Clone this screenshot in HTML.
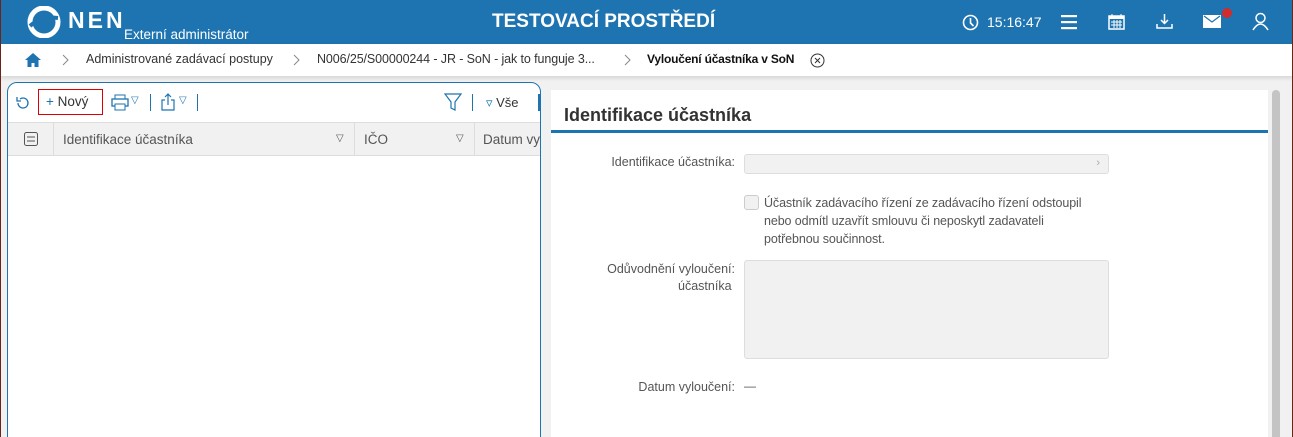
<!DOCTYPE html>
<html><head><meta charset="utf-8"><style>
*{box-sizing:border-box;margin:0;padding:0}
html{width:1293px;height:437px;overflow:hidden}
body{width:1293px;height:437px;overflow:hidden;background:#f1f1f1;font-family:"Liberation Sans",sans-serif;position:relative}
.hdr{position:absolute;left:0;top:0;width:1293px;height:44px;background:#1e74b0;color:#fff}
.abs{position:absolute;white-space:nowrap}
.bc{position:absolute;left:0;top:44px;width:1293px;height:32px;background:#fff;box-shadow:0 2px 4px rgba(0,0,0,.12);font-size:12.5px;color:#333}
.bc span{position:absolute;top:8px;white-space:nowrap}
.lp{position:absolute;left:7px;top:82px;width:534px;height:370px;background:#fff;border:1px solid #1e74b0;border-radius:10px 10px 0 0;overflow:hidden}
.rp{position:absolute;left:551px;top:90px;width:717px;height:360px;background:#fff}
.lbl{position:absolute;font-size:12.5px;color:#555;text-align:right;white-space:nowrap}
</style></head><body>
<div class="abs" style="left:0;top:0;width:1px;height:437px;background:#6b2418;z-index:5"></div>
<div class="abs" style="left:1292px;top:0;width:1px;height:437px;background:#6b2418;z-index:5"></div>
<div class="hdr">
 <svg class="abs" style="left:27px;top:6px" width="34" height="32" viewBox="0 0 34 32"><circle cx="17" cy="16" r="14" fill="none" stroke="#fff" stroke-width="5"/><path d="M3 20 Q14 10 31 12" stroke="#1e74b0" stroke-width="4" fill="none"/></svg>
 <div class="abs" style="left:68px;top:7px;font-size:23px;font-weight:bold;letter-spacing:3px">NEN</div>
 <div class="abs" style="left:124px;top:27px;font-size:13.5px">Externí administrátor</div>
 <div class="abs" style="left:492px;top:11px;font-size:19px;font-weight:bold;letter-spacing:0">TESTOVACÍ PROSTŘEDÍ</div>
 <svg class="abs" style="left:962px;top:14px" width="17" height="17" viewBox="0 0 17 17"><circle cx="8.5" cy="8.5" r="7" fill="none" stroke="#fff" stroke-width="1.6"/><path d="M8.5 4v5l3 3" stroke="#fff" stroke-width="1.6" fill="none"/></svg>
 <div class="abs" style="left:987px;top:14px;font-size:14px">15:16:47</div>
 <svg class="abs" style="left:1061px;top:14px" width="16" height="16"><rect y="1" width="16" height="2.2" fill="#fff"/><rect y="7" width="16" height="2.2" fill="#fff"/><rect y="13" width="16" height="2.2" fill="#fff"/></svg>
 <svg class="abs" style="left:1108px;top:13px" width="17" height="17"><rect x="1" y="3" width="15" height="13" fill="none" stroke="#fff" stroke-width="1.5"/><rect x="1" y="3" width="15" height="3" fill="#fff"/><path d="M4 1v4M13 1v4M3 9h11M3 12h11M6 7v8M9 7v8M12 7v8" stroke="#fff" stroke-width="1"/></svg>
 <svg class="abs" style="left:1156px;top:13px" width="17" height="17"><path d="M8.5 1v9M5 7l3.5 3.5L12 7" stroke="#fff" stroke-width="1.5" fill="none"/><path d="M1 11v4h15v-4" stroke="#fff" stroke-width="1.5" fill="none"/></svg>
 <svg class="abs" style="left:1203px;top:15px" width="18" height="13"><rect width="18" height="13" fill="#fff"/><path d="M1 1l8 6 8-6" stroke="#1e74b0" stroke-width="1.2" fill="none"/></svg>
 <div class="abs" style="left:1222px;top:8px;width:10px;height:10px;border-radius:50%;background:#d22b2b"></div>
 <svg class="abs" style="left:1252px;top:12px" width="17" height="19"><circle cx="8.5" cy="6" r="4.5" fill="none" stroke="#fff" stroke-width="1.5"/><path d="M1 18q7.5-12 15 0" fill="none" stroke="#fff" stroke-width="1.5"/></svg>
</div>
<div class="bc">
 <svg class="abs" style="left:24px;top:8px" width="18" height="16"><path d="M9 1L1 8h2.5v7h4v-4h3v4h4V8H17z" fill="#1e74b0"/></svg>
 <svg class="abs" style="left:62px;top:10px" width="8" height="12"><path d="M1 1l5 5-5 5" fill="none" stroke="#888"/></svg>
 <span style="left:86px">Administrované zadávací postupy</span>
 <svg class="abs" style="left:293px;top:10px" width="8" height="12"><path d="M1 1l5 5-5 5" fill="none" stroke="#888"/></svg>
 <span style="left:317px;letter-spacing:-.1px">N006/25/S00000244 - JR - SoN - jak to funguje 3...</span>
 <svg class="abs" style="left:624px;top:10px" width="8" height="12"><path d="M1 1l5 5-5 5" fill="none" stroke="#888"/></svg>
 <span style="left:647px;font-weight:bold;color:#111;font-size:12px;letter-spacing:-.2px">Vyloučení účastníka v SoN</span>
 <svg class="abs" style="left:810px;top:9px" width="15" height="15"><circle cx="7.5" cy="7.5" r="6.5" fill="none" stroke="#333"/><path d="M5 5l5 5M10 5l-5 5" stroke="#333"/></svg>
</div>
<div class="lp">
 <svg class="abs" style="left:7px;top:12px" width="16" height="16"><path d="M3 8a5 5 0 1 0 2-4" fill="none" stroke="#1e74b0" stroke-width="1.3"/><path d="M2 2v4h4" fill="none" stroke="#1e74b0" stroke-width="1.3"/></svg>
 <div class="abs" style="left:30px;top:6px;width:65px;height:26px;border:1px solid #d00;font-size:13.5px;color:#1e74b0;padding:4px 0 0 7px">+ <span style="color:#333">Nový</span></div>
 <svg class="abs" style="left:103px;top:11px" width="18" height="17"><rect x="4" y="1" width="10" height="4" fill="none" stroke="#1e74b0"/><rect x="1" y="5" width="16" height="7" fill="none" stroke="#1e74b0" stroke-width="1.3"/><rect x="4" y="10" width="10" height="6" fill="#fff" stroke="#1e74b0"/></svg>
 <div class="abs" style="left:123px;top:12px;font-size:10px;color:#1e74b0">▽</div>
 <div class="abs" style="left:142px;top:11px;width:1px;height:17px;background:#1e74b0"></div>
 <svg class="abs" style="left:152px;top:10px" width="16" height="18"><path d="M5 7H2v10h12V7h-3M8 12V1M5 4l3-3 3 3" fill="none" stroke="#1e74b0" stroke-width="1.2"/></svg>
 <div class="abs" style="left:171px;top:12px;font-size:10px;color:#1e74b0">▽</div>
 <div class="abs" style="left:189px;top:11px;width:1px;height:17px;background:#1e74b0"></div>
 <svg class="abs" style="left:436px;top:10px" width="18" height="18"><path d="M1 1h16l-6 8v8l-4-2V9z" fill="none" stroke="#1e74b0" stroke-width="1.2"/></svg>
 <div class="abs" style="left:464px;top:11px;width:1px;height:17px;background:#1e74b0"></div>
 <div class="abs" style="left:478px;top:12px;font-size:13px;color:#1e74b0">▿ <span style="color:#333">Vše</span></div>
 <div class="abs" style="left:530px;top:11px;width:2px;height:17px;background:#1e74b0"></div>
 <div class="abs" style="left:0;top:39px;width:534px;height:34px;background:#f1f1f1;border-top:1px solid #ddd;border-bottom:1px solid #ddd;font-size:13.5px;color:#555">
  <svg class="abs" style="left:16px;top:9px" width="14" height="14"><rect x=".5" y=".5" width="13" height="13" rx="2" fill="none" stroke="#555"/><path d="M3 5h8M3 9h8" stroke="#555"/></svg>
  <div class="abs" style="left:45px;top:0;width:1px;height:33px;background:#ddd"></div>
  <span class="abs" style="left:55px;top:9px">Identifikace účastníka</span>
  <span class="abs" style="left:328px;top:10px;font-size:10px">▽</span>
  <div class="abs" style="left:346px;top:0;width:1px;height:33px;background:#ddd"></div>
  <span class="abs" style="left:356px;top:9px">IČO</span>
  <span class="abs" style="left:448px;top:10px;font-size:10px">▽</span>
  <div class="abs" style="left:466px;top:0;width:1px;height:33px;background:#ddd"></div>
  <span class="abs" style="left:475px;top:9px">Datum vyl</span>
 </div>
</div>
<div class="rp">
 <div class="abs" style="left:13px;top:15px;font-size:18px;font-weight:bold;color:#333">Identifikace účastníka</div>
 <div class="abs" style="left:0;top:40px;width:717px;height:3px;background:#1e74b0"></div>
 <div class="lbl" style="left:0;top:65px;width:184px">Identifikace účastníka:</div>
 <div class="abs" style="left:193px;top:64px;width:365px;height:20px;background:#f1f1f1;border:1px solid #ddd;border-radius:3px;font-size:11px;color:#aaa;text-align:right;padding:2px 8px 0 0">›</div>
 <div class="abs" style="left:193px;top:105px;width:15px;height:15px;background:#f1f1f1;border:1px solid #ccc;border-radius:3px"></div>
 <div class="abs" style="left:213px;top:104px;font-size:12.5px;line-height:18px;color:#555;width:360px;white-space:normal;letter-spacing:-.1px">Účastník zadávacího řízení ze zadávacího řízení odstoupil<br>nebo odmítl uzavřít smlouvu či neposkytl zadavateli<br>potřebnou součinnost.</div>
 <div class="lbl" style="left:0;top:171px;width:184px;line-height:17px">Odůvodnění vyloučení:<br>účastníka&nbsp;</div>
 <div class="abs" style="left:193px;top:170px;width:365px;height:99px;background:#f1f1f1;border:1px solid #ddd;border-radius:3px"></div>
 <div class="lbl" style="left:0;top:290px;width:184px">Datum vyloučení:</div>
 <div class="abs" style="left:193px;top:289px;font-size:12px;color:#555">—</div>
</div>
<div class="abs" style="left:1272px;top:90px;width:8px;height:350px;background:#c4c4c4;border-radius:4px 4px 0 0"></div>
</body></html>
